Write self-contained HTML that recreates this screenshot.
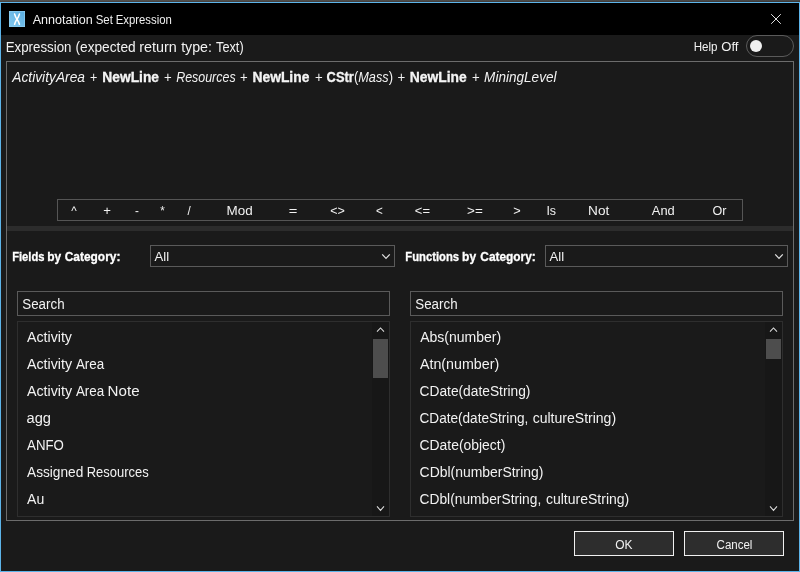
<!DOCTYPE html>
<html lang="en"><head><meta charset="utf-8"><title>Annotation Set Expression</title>
<style>
html,body{margin:0;padding:0;}
body{width:800px;height:572px;overflow:hidden;background:#454241;font-family:"Liberation Sans",sans-serif;}
#win{position:absolute;left:0;top:0;width:800px;height:572px;overflow:hidden;}
#win div,#win svg{position:absolute;box-sizing:border-box;}
.t{position:absolute;white-space:pre;line-height:20px;transform-origin:0 0;}
#frame{left:0;top:2px;width:800px;height:570px;background:#5db4e9;}
#titlebar{left:1px;top:3px;width:798px;height:32px;background:#000;}
#body{left:1px;top:35px;width:798px;height:536px;background:#1a1a1a;}
#outer{left:6px;top:61px;width:788px;height:460px;border:1px solid #6c6c6c;}
#toolbar{left:57px;top:199px;width:686px;height:22px;border:1px solid #555;}
#split{left:7px;top:226px;width:786px;height:5px;background:#2c2c2c;}
.combo{top:245px;height:22px;border:1px solid #5a5a5a;}
.search{top:291px;height:25px;border:1px solid #5a5a5a;}
.list{top:321px;height:196px;border:1px solid #2e2e2e;}
.track{top:322px;width:17px;height:194px;background:#171717;}
.thumb{width:15px;background:#4d4d4d;}
.btn{top:531px;width:100px;height:25px;border:1px solid #f0f0f0;background:#2d2d2d;}
#toggle{left:746px;top:35px;width:48px;height:22px;border:1px solid #5a5a5a;border-radius:11px;}
#knob{left:750px;top:40px;width:12px;height:12px;border-radius:6px;background:#f0f0f0;}
#texts{position:absolute;left:0;top:0;width:800px;height:572px;will-change:transform;}
#bg0{left:0;top:0;width:800px;height:1px;background:linear-gradient(90deg,#53514e,#4d4c4a 50%,#464646);}
#bg1{left:0;top:1px;width:800px;height:1px;background:linear-gradient(90deg,#4a4542,#443f3d 50%,#3d3a38);}

</style></head>
<body>
<div id="win">
<div id="bg0"></div><div id="bg1"></div>
<div id="frame"></div>
<div id="titlebar"></div>
<div id="body"></div>
<svg id="icon" style="left:9px;top:11px" width="16" height="16" viewBox="0 0 16 16">
<defs><linearGradient id="ig" x1="0" y1="1" x2="1" y2="0"><stop offset="0" stop-color="#84c8ef"/><stop offset="1" stop-color="#5aaee2"/></linearGradient></defs>
<rect x="0" y="0" width="16" height="16" fill="#8ccdf2"/>
<rect x="0.7" y="0.7" width="14.6" height="14.6" fill="url(#ig)"/>
<path d="M5.6 3.1 Q6.5 6.3 8 8.2 Q9.5 10.1 10.4 13.3 M10.4 3.1 Q9.5 6.3 8 8.2 Q6.5 10.1 5.6 13.3" stroke="#fff" stroke-width="1.6" fill="none" stroke-linecap="round"/>
</svg>
<svg id="close" style="left:766px;top:9px" width="20" height="20" viewBox="0 0 20 20"><path d="M5.2 5.2 L14.8 14.8 M14.8 5.2 L5.2 14.8" stroke="#ededed" stroke-width="0.95" fill="none"/></svg>
<div id="toggle"></div><div id="knob"></div>
<div id="outer"></div>
<div id="toolbar"></div>
<div id="split"></div>
<div class="combo" style="left:150px;width:245px"></div>
<svg style="left:380px;top:251px" width="12" height="11" viewBox="0 0 12 11"><path d="M2.2 3.3 L6 7.3 L9.8 3.3" stroke="#e0e0e0" stroke-width="1.2" fill="none"/></svg>
<div class="combo" style="left:545px;width:243px"></div>
<svg style="left:773px;top:251px" width="12" height="11" viewBox="0 0 12 11"><path d="M2.2 3.3 L6 7.3 L9.8 3.3" stroke="#e0e0e0" stroke-width="1.2" fill="none"/></svg>
<div class="search" style="left:17px;width:373px"></div>
<div class="search" style="left:410px;width:373px"></div>
<div class="list" style="left:17px;width:373px"></div>
<div class="list" style="left:410px;width:373px"></div>
<div class="track" style="left:372px"></div>
<div class="track" style="left:765px"></div>
<div class="thumb" style="left:373px;top:339px;height:39px"></div>
<div class="thumb" style="left:766px;top:339px;height:20px"></div>
<svg style="left:374px;top:324px" width="13" height="11" viewBox="0 0 13 11"><path d="M3 7.6 L6.5 4 L10 7.6" stroke="#dedede" stroke-width="1.05" fill="none"/></svg>
<svg style="left:767px;top:324px" width="13" height="11" viewBox="0 0 13 11"><path d="M3 7.6 L6.5 4 L10 7.6" stroke="#dedede" stroke-width="1.05" fill="none"/></svg>
<svg style="left:374px;top:503px" width="13" height="11" viewBox="0 0 13 11"><path d="M3 3.4 L6.5 7.4 L10 3.4" stroke="#dedede" stroke-width="1.05" fill="none"/></svg>
<svg style="left:767px;top:503px" width="13" height="11" viewBox="0 0 13 11"><path d="M3 3.4 L6.5 7.4 L10 3.4" stroke="#dedede" stroke-width="1.05" fill="none"/></svg>
<div class="btn" style="left:574px"></div>
<div class="btn" style="left:684px"></div>

<div id="texts">
<span class="t" id="title_0" style="left:32px;top:10px;font-size:12.5px;transform:translateX(0.69px) scaleX(1.0049);color:#f0f0f0;">Annotation</span>
<span class="t" id="title_1" style="left:95px;top:10px;font-size:12.5px;transform:translateX(0.70px) scaleX(0.9146);color:#f0f0f0;">Set</span>
<span class="t" id="title_2" style="left:115px;top:10px;font-size:12.5px;transform:translateX(0.69px) scaleX(0.9082);color:#f0f0f0;">Expression</span>
<span class="t" id="exprlbl_0" style="left:5px;top:37px;font-size:14px;transform:translateX(0.67px) scaleX(0.9506);color:#f2f2f2;">Expression</span>
<span class="t" id="exprlbl_1" style="left:75px;top:37px;font-size:14px;transform:translateX(0.45px) scaleX(0.9791);color:#f2f2f2;">(expected</span>
<span class="t" id="exprlbl_2" style="left:139px;top:37px;font-size:14px;transform:translateX(0.26px) scaleX(1.0280);color:#f2f2f2;">return</span>
<span class="t" id="exprlbl_3" style="left:181px;top:37px;font-size:14px;transform:translateX(0.13px) scaleX(1.0157);color:#f2f2f2;">type:</span>
<span class="t" id="exprlbl_4" style="left:216px;top:37px;font-size:14px;transform:translateX(0.03px) scaleX(0.9099);color:#f2f2f2;">Text)</span>
<span class="t" id="help_0" style="left:693px;top:37px;font-size:12.5px;transform:translateX(0.70px) scaleX(0.9262);color:#f2f2f2;">Help</span>
<span class="t" id="help_1" style="left:721px;top:37px;font-size:12.5px;transform:translateX(0.30px) scaleX(1.0427);color:#f2f2f2;">Off</span>
<span class="t" id="e1" style="left:12px;top:67px;font-size:14px;transform:translateX(0.32px) scaleX(0.9824);color:#f2f2f2;font-style:italic;">ActivityArea</span>
<span class="t" id="p1" style="left:89px;top:67px;font-size:14px;transform:translateX(0.99px) scaleX(0.8963);color:#f2f2f2;">+</span>
<span class="t" id="e2" style="left:102px;top:67px;font-size:14px;transform:translateX(0.34px) scaleX(0.9847);color:#f2f2f2;font-weight:bold;-webkit-text-stroke:0.3px #fff;">NewLine</span>
<span class="t" id="p2" style="left:164px;top:67px;font-size:14px;transform:translateX(0.00px) scaleX(0.9431);color:#f2f2f2;">+</span>
<span class="t" id="e3" style="left:176px;top:67px;font-size:14px;transform:translateX(0.20px) scaleX(0.8877);color:#f2f2f2;font-style:italic;">Resources</span>
<span class="t" id="p3" style="left:240px;top:67px;font-size:14px;transform:translateX(0.00px) scaleX(0.9431);color:#f2f2f2;">+</span>
<span class="t" id="e4" style="left:252px;top:67px;font-size:14px;transform:translateX(0.44px) scaleX(0.9891);color:#f2f2f2;font-weight:bold;-webkit-text-stroke:0.3px #fff;">NewLine</span>
<span class="t" id="p4" style="left:315px;top:67px;font-size:14px;transform:translateX(0.00px) scaleX(0.9431);color:#f2f2f2;">+</span>
<span class="t" id="e5" style="left:326px;top:67px;font-size:14px;transform:translateX(0.61px) scaleX(0.9171);color:#f2f2f2;font-weight:bold;-webkit-text-stroke:0.3px #fff;">CStr</span>
<span class="t" id="e5b" style="left:354px;top:67px;font-size:14px;transform:translateX(0.06px) scaleX(0.9300);color:#f2f2f2;">(</span>
<span class="t" id="e6" style="left:358px;top:67px;font-size:14px;transform:translateX(0.26px) scaleX(0.9083);color:#f2f2f2;font-style:italic;">Mass</span>
<span class="t" id="e6b" style="left:388px;top:67px;font-size:14px;transform:translateX(0.79px) scaleX(0.9300);color:#f2f2f2;">)</span>
<span class="t" id="p5" style="left:397px;top:67px;font-size:14px;transform:translateX(0.38px) scaleX(0.9436);color:#f2f2f2;">+</span>
<span class="t" id="e7" style="left:409px;top:67px;font-size:14px;transform:translateX(0.82px) scaleX(0.9887);color:#f2f2f2;font-weight:bold;-webkit-text-stroke:0.3px #fff;">NewLine</span>
<span class="t" id="p6" style="left:472px;top:67px;font-size:14px;transform:translateX(0.00px) scaleX(0.9431);color:#f2f2f2;">+</span>
<span class="t" id="e8" style="left:484px;top:67px;font-size:14px;transform:translateX(0.10px) scaleX(0.9690);color:#f2f2f2;font-style:italic;">MiningLevel</span>
<span class="t" id="op0" style="left:71px;top:201px;font-size:12.5px;transform:translateX(0.37px) scaleX(0.9300);color:#f2f2f2;">^</span>
<span class="t" id="op1" style="left:103px;top:201px;font-size:12.5px;transform:translateX(0.14px) scaleX(1.0510);color:#f2f2f2;">+</span>
<span class="t" id="op2" style="left:135px;top:201px;font-size:12.5px;transform:translateX(0.05px) scaleX(0.9300);color:#f2f2f2;">-</span>
<span class="t" id="op3" style="left:160px;top:201px;font-size:12.5px;transform:translateX(0.21px) scaleX(0.9300);color:#f2f2f2;">*</span>
<span class="t" id="op4" style="left:187px;top:201px;font-size:12.5px;transform:translateX(0.41px) scaleX(0.9300);color:#f2f2f2;">/</span>
<span class="t" id="op5" style="left:226px;top:201px;font-size:12.5px;transform:translateX(0.47px) scaleX(1.0751);color:#f2f2f2;">Mod</span>
<span class="t" id="op6" style="left:288px;top:201px;font-size:12.5px;transform:translateX(0.65px) scaleX(1.1747);color:#f2f2f2;">=</span>
<span class="t" id="op7" style="left:330px;top:201px;font-size:12.5px;transform:translateX(0.26px) scaleX(1.0041);color:#f2f2f2;">&lt;&gt;</span>
<span class="t" id="op8" style="left:376px;top:201px;font-size:12.5px;transform:translateX(0.12px) scaleX(0.9300);color:#f2f2f2;">&lt;</span>
<span class="t" id="op9" style="left:414px;top:201px;font-size:12.5px;transform:translateX(0.84px) scaleX(1.0359);color:#f2f2f2;">&lt;=</span>
<span class="t" id="op10" style="left:467px;top:201px;font-size:12.5px;transform:translateX(0.12px) scaleX(1.0742);color:#f2f2f2;">&gt;=</span>
<span class="t" id="op11" style="left:513px;top:201px;font-size:12.5px;transform:translateX(0.17px) scaleX(1.0199);color:#f2f2f2;">&gt;</span>
<span class="t" id="op12" style="left:546px;top:201px;font-size:12.5px;transform:translateX(0.38px) scaleX(0.9938);color:#f2f2f2;">Is</span>
<span class="t" id="op13" style="left:588px;top:201px;font-size:12.5px;transform:translateX(0.12px) scaleX(1.0906);color:#f2f2f2;">Not</span>
<span class="t" id="op14" style="left:651px;top:201px;font-size:12.5px;transform:translateX(0.86px) scaleX(1.0307);color:#f2f2f2;">And</span>
<span class="t" id="op15" style="left:712px;top:201px;font-size:12.5px;transform:translateX(0.38px) scaleX(1.0044);color:#f2f2f2;">Or</span>
<span class="t" id="fl_0" style="left:12px;top:247px;font-size:12.5px;transform:translateX(0.16px) scaleX(0.8955);color:#ffffff;font-weight:bold;-webkit-text-stroke:0.3px #fff;">Fields</span>
<span class="t" id="fl_1" style="left:47px;top:247px;font-size:12.5px;transform:translateX(0.14px) scaleX(0.9546);color:#ffffff;font-weight:bold;-webkit-text-stroke:0.3px #fff;">by</span>
<span class="t" id="fl_2" style="left:64px;top:247px;font-size:12.5px;transform:translateX(0.73px) scaleX(0.9540);color:#ffffff;font-weight:bold;-webkit-text-stroke:0.3px #fff;">Category:</span>
<span class="t" id="fn_0" style="left:405px;top:247px;font-size:12.5px;transform:translateX(0.34px) scaleX(0.9005);color:#ffffff;font-weight:bold;-webkit-text-stroke:0.3px #fff;">Functions</span>
<span class="t" id="fn_1" style="left:462px;top:247px;font-size:12.5px;transform:translateX(0.05px) scaleX(0.9598);color:#ffffff;font-weight:bold;-webkit-text-stroke:0.3px #fff;">by</span>
<span class="t" id="fn_2" style="left:480px;top:247px;font-size:12.5px;transform:translateX(0.32px) scaleX(0.9513);color:#ffffff;font-weight:bold;-webkit-text-stroke:0.3px #fff;">Category:</span>
<span class="t" id="all1" style="left:154px;top:247px;font-size:12.5px;transform:translateX(0.50px) scaleX(1.0497);color:#f2f2f2;">All</span>
<span class="t" id="all2" style="left:549px;top:247px;font-size:12.5px;transform:translateX(0.50px) scaleX(1.0497);color:#f2f2f2;">All</span>
<span class="t" id="s1" style="left:22px;top:294px;font-size:14px;transform:translateX(0.29px) scaleX(0.9536);color:#f2f2f2;">Search</span>
<span class="t" id="s2" style="left:415px;top:294px;font-size:14px;transform:translateX(0.29px) scaleX(0.9536);color:#f2f2f2;">Search</span>
<span class="t" id="l0" style="left:26px;top:327px;font-size:14px;transform:translateX(0.98px) scaleX(1.0135);color:#f2f2f2;">Activity</span>
<span class="t" id="l1_0" style="left:26px;top:354px;font-size:14px;transform:translateX(0.96px) scaleX(1.0173);color:#f2f2f2;">Activity</span>
<span class="t" id="l1_1" style="left:75px;top:354px;font-size:14px;transform:translateX(0.93px) scaleX(0.9556);color:#f2f2f2;">Area</span>
<span class="t" id="l2_0" style="left:26px;top:381px;font-size:14px;transform:translateX(0.96px) scaleX(1.0173);color:#f2f2f2;">Activity</span>
<span class="t" id="l2_1" style="left:75px;top:381px;font-size:14px;transform:translateX(0.93px) scaleX(0.9556);color:#f2f2f2;">Area</span>
<span class="t" id="l2_2" style="left:107px;top:381px;font-size:14px;transform:translateX(0.61px) scaleX(1.0814);color:#f2f2f2;">Note</span>
<span class="t" id="l3" style="left:26px;top:408px;font-size:14px;transform:translateX(0.53px) scaleX(1.0482);color:#f2f2f2;">agg</span>
<span class="t" id="l4" style="left:27px;top:435px;font-size:14px;transform:translateX(0.12px) scaleX(0.9457);color:#f2f2f2;">ANFO</span>
<span class="t" id="l5_0" style="left:27px;top:462px;font-size:14px;transform:translateX(0.00px) scaleX(0.9779);color:#f2f2f2;">Assigned</span>
<span class="t" id="l5_1" style="left:86px;top:462px;font-size:14px;transform:translateX(0.67px) scaleX(0.9258);color:#f2f2f2;">Resources</span>
<span class="t" id="l6" style="left:27px;top:489px;font-size:14px;transform:translateX(0.04px) scaleX(1.0036);color:#f2f2f2;">Au</span>
<span class="t" id="r0" style="left:420px;top:327px;font-size:14px;transform:translateX(0.20px) scaleX(1.0007);color:#f2f2f2;">Abs(number)</span>
<span class="t" id="r1" style="left:419px;top:354px;font-size:14px;transform:translateX(0.94px) scaleX(1.0181);color:#f2f2f2;">Atn(number)</span>
<span class="t" id="r2" style="left:419px;top:381px;font-size:14px;transform:translateX(0.55px) scaleX(0.9825);color:#f2f2f2;">CDate(dateString)</span>
<span class="t" id="r3_0" style="left:419px;top:408px;font-size:14px;transform:translateX(0.53px) scaleX(0.9704);color:#f2f2f2;">CDate(dateString,</span>
<span class="t" id="r3_1" style="left:532px;top:408px;font-size:14px;transform:translateX(0.68px) scaleX(1.0019);color:#f2f2f2;">cultureString)</span>
<span class="t" id="r4" style="left:419px;top:435px;font-size:14px;transform:translateX(0.56px) scaleX(0.9922);color:#f2f2f2;">CDate(object)</span>
<span class="t" id="r5" style="left:419px;top:462px;font-size:14px;transform:translateX(0.57px) scaleX(0.9948);color:#f2f2f2;">CDbl(numberString)</span>
<span class="t" id="r6_0" style="left:419px;top:489px;font-size:14px;transform:translateX(0.58px) scaleX(0.9834);color:#f2f2f2;">CDbl(numberString,</span>
<span class="t" id="r6_1" style="left:545px;top:489px;font-size:14px;transform:translateX(0.88px) scaleX(1.0015);color:#f2f2f2;">cultureString)</span>
<span class="t" id="ok" style="left:615px;top:535px;font-size:12.5px;transform:translateX(0.24px) scaleX(0.9584);color:#f2f2f2;">OK</span>
<span class="t" id="cancel" style="left:716px;top:535px;font-size:12.5px;transform:translateX(0.60px) scaleX(0.9209);color:#f2f2f2;">Cancel</span>
</div>
</div>
</body></html>
